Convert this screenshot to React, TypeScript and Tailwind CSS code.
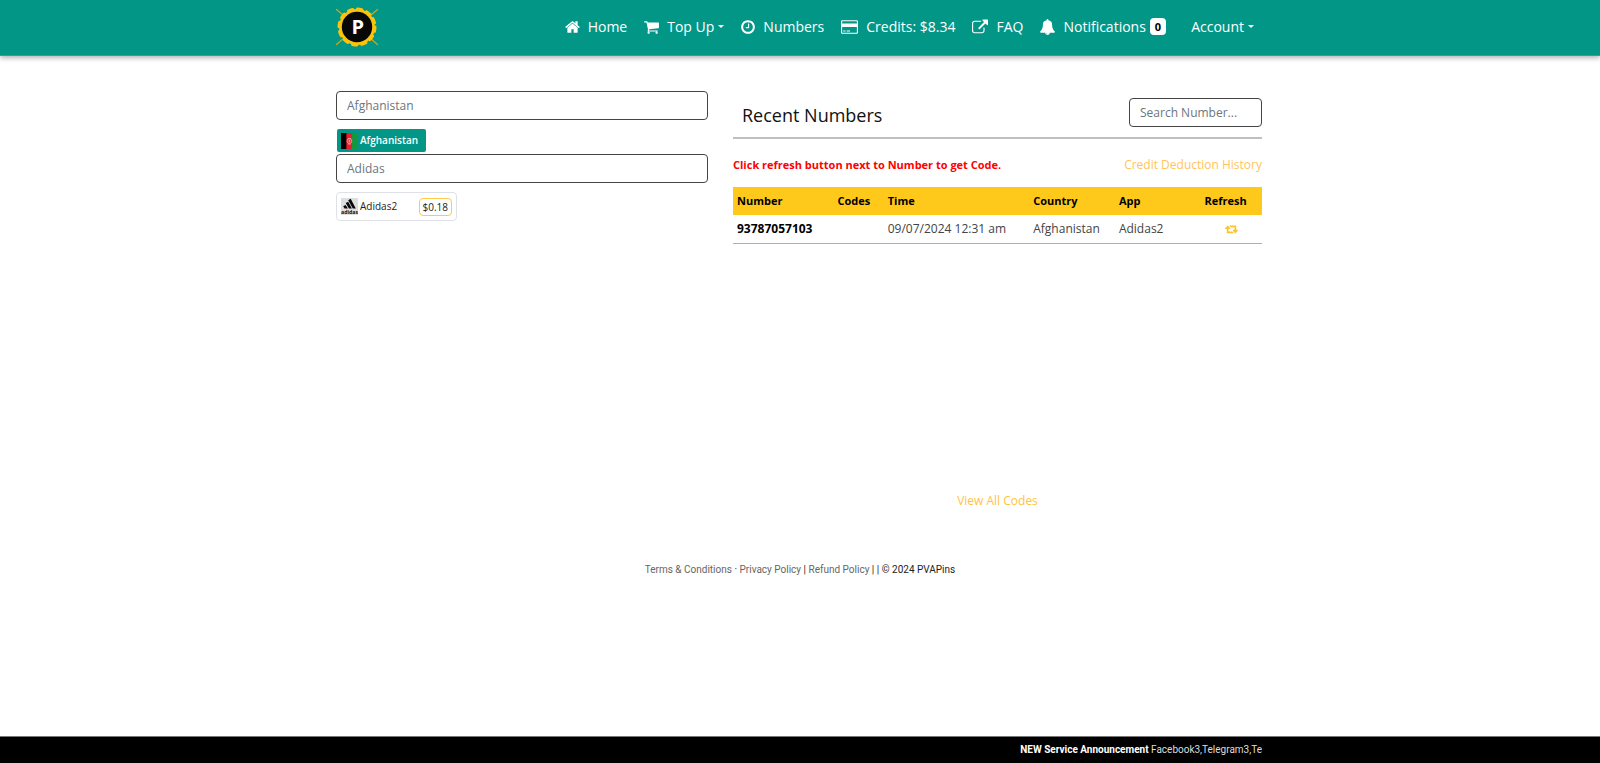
import React from "react";

type IconProps = { path: string; box: string; className: string };

const Icon = ({ path, box, className }: IconProps) => (
  <svg viewBox={box} className={className} fill="currentColor" aria-hidden="true">
    <path d={path} />
  </svg>
);

const HOME =
  "M1472 992v480q0 26-19 45t-45 19h-384v-384h-256v384h-384q-26 0-45-19t-19-45v-480q0-1 .5-3t.5-3l575-474 575 474q1 2 1 6zm223-69l-62 74q-8 9-21 11h-3q-13 0-21-7l-692-577-692 577q-12 8-24 7-13-2-21-11l-62-74q-8-10-7-23.5t11-21.5l719-599q32-26 76-26t76 26l244 204v-195q0-14 9-23t23-9h192q14 0 23 9t9 23v408l219 182q10 8 11 21.5t-7 23.5z";
const CART =
  "M704 1536q0 52-38 90t-90 38-90-38-38-90 38-90 90-38 90 38 38 90zm896 0q0 52-38 90t-90 38-90-38-38-90 38-90 90-38 90 38 38 90zm128-1088v512q0 24-16.5 42.5t-40.5 21.5l-1044 122q13 60 13 70 0 16-24 64h920q26 0 45 19t19 45-19 45-45 19h-1024q-26 0-45-19t-19-45q0-11 8-31.5t16-36 21.5-40 15.5-29.5l-177-823h-204q-26 0-45-19t-19-45 19-45 45-19h256q16 0 28.5 6.5t19.5 15.5 13 24.5 8 26 5.5 29.5 4.5 26h1201q26 0 45 19t19 45z";
const CLOCK =
  "M1024 544v448q0 14-9 23t-23 9h-320q-14 0-23-9t-9-23v-64q0-14 9-23t23-9h224v-352q0-14 9-23t23-9h64q14 0 23 9t9 23zm416 352q0-148-73-273t-198-198-273-73-273 73-198 198-73 273 73 273 198 198 273 73 273-73 198-198 73-273zm224 0q0 209-103 385.5t-279.5 279.5-385.5 103-385.5-103-279.5-279.5-103-385.5 103-385.5 279.5-279.5 385.5-103 385.5 103 279.5 279.5 103 385.5z";
const CARD =
  "M1760 128h-1600q-66 0-113 47t-47 113v1216q0 66 47 113t113 47h1600q66 0 113-47t47-113v-1216q0-66-47-113t-113-47zm-1600 128h1600q13 0 22.5 9.5t9.5 22.5v224h-1664v-224q0-13 9.5-22.5t22.5-9.5zm1600 1280h-1600q-13 0-22.5-9.5t-9.5-22.5v-608h1664v608q0 13-9.5 22.5t-22.5 9.5zm-1504-128v-128h256v128h-256zm384 0v-128h384v128h-384z";
const EXTERNAL =
  "M1472 992v320q0 119-84.5 203.5t-203.5 84.5h-832q-119 0-203.5-84.5t-84.5-203.5v-832q0-119 84.5-203.5t203.5-84.5h704q14 0 23 9t9 23v64q0 14-9 23t-23 9h-704q-66 0-113 47t-47 113v832q0 66 47 113t113 47h832q66 0 113-47t47-113v-320q0-14 9-23t23-9h64q14 0 23 9t9 23zm384-864v512q0 26-19 45t-45 19-45-19l-176-176-652 652q-10 10-23 10t-23-10l-114-114q-10-10-10-23t10-23l652-652-176-176q-19-19-19-45t19-45 45-19h512q26 0 45 19t19 45z";
const BELL =
  "M912 1696q0-16-16-16-59 0-101.5-42.5t-42.5-101.5q0-16-16-16t-16 16q0 73 51.5 124.5t124.5 51.5q16 0 16-16zm816-288q0 52-38 90t-90 38h-448q0 106-75 181t-181 75-181-75-75-181h-448q-52 0-90-38t-38-90q50-42 91-88t85-119.5 74.5-158.5 50-206 19.5-260q0-152 117-282.5t307-158.5q-8-19-8-39 0-40 28-68t68-28 68 28 28 68q0 20-8 39 190 28 307 158.5t117 282.5q0 139 19.5 260t50 206 74.5 158.5 85 119.5 91 88z";
const RETWEET =
  "M1280 1504q0 13-9.5 22.5t-22.5 9.5h-960q-8 0-13.5-2t-9-7-5.5-8-3-11.5-1-11.5v-600h-192q-26 0-45-19t-19-45q0-24 15-41l320-384q19-22 49-22t49 22l320 384q15 17 15 41 0 26-19 45t-45 19h-192v384h576q16 0 25 11l160 192q7 10 7 21zm640-416q0 24-15 41l-320 384q-20 23-49 23t-49-23l-320-384q-15-17-15-41 0-26 19-45t45-19h192v-384h-576q-16 0-25-12l-160-192q-7-9-7-20 0-13 9.5-22.5t22.5-9.5h960q8 0 13.5 2t9 7 5.5 8 3 11.5 1 11.5v600h192q26 0 45 19t19 45z";

const Caret = () => (
  <svg viewBox="0 0 6 3" className="ml-1 h-[3px] w-[6px]" fill="currentColor" aria-hidden="true">
    <path d="M0 0h6L3 3z" />
  </svg>
);

const Logo = () => (
  <svg viewBox="1 0 42 44" className="h-11 w-[42px]" role="img" aria-label="PVAPins">
    <g stroke="#c9a51c" strokeWidth="1.3" strokeLinecap="round">
      <path d="M1.5 4.5 42.5 39.5M42.5 4.5 1.5 39.5" />
    </g>
    <circle cx="22" cy="22" r="18" fill="#fdc30a" />
    <circle cx="22" cy="22" r="18" fill="none" stroke="#fdc30a" strokeWidth="3" strokeDasharray="4.4 5.025" strokeLinecap="round" />
    <circle cx="22" cy="22" r="15.2" fill="#080808" />
    <text x="22.8" y="29" textAnchor="middle" fontSize="20" fontWeight="700" fill="#fff" fontFamily="Open Sans, sans-serif">
      P
    </text>
  </svg>
);

const AfghanFlag = () => (
  <svg viewBox="0 0 16 16" className="size-4 shrink-0" aria-hidden="true">
    <rect width="6" height="16" fill="#000" />
    <rect x="5.4" width="6" height="16" fill="#ea1f2d" />
    <rect x="11" width="5" height="16" fill="#17953f" />
    <g fill="none" stroke="#f2a3a8" strokeWidth=".8">
      <circle cx="8.4" cy="8" r="2.4" />
      <path d="M7 5.5h3M7 11h3M8.4 6.5v3M7.3 8h2.2" />
    </g>
  </svg>
);

const AdidasMark = () => (
  <svg viewBox="0 0 17 17" className="size-[17px] shrink-0" aria-hidden="true">
    <rect width="17" height="17" fill="#dedede" />
    <path d="M7.2 2.2 9.7.8 14.8 10.6h-3zM4.7 5.1l2.5-1.4 3.7 6.9H7.9zM2.2 8.3l2.4-1.3 2.3 3.6H3.6z" fill="#080808" />
    <text x="8.5" y="16.1" textAnchor="middle" fontSize="5.2" fontWeight="700" fill="#111" fontFamily="Open Sans, sans-serif">
      adidas
    </text>
  </svg>
);

const container = "mx-auto w-full max-w-[928px] pr-[2px]";
const navLink = "flex items-center gap-2";
const fieldStyle =
  "block h-[29px] w-full rounded border border-[#444] bg-white px-[10px] text-xs text-[#212529] placeholder:text-[#6c757d]";

export default function App() {
  return (
    <div className="flex min-h-screen flex-col bg-white font-['Open_Sans','Noto_Sans',sans-serif] text-xs text-[#444]">
      <header className="border-b border-[#65888a] bg-[#029687] shadow-[0_2px_5px_rgba(0,0,0,0.3)]">
        <div className={`${container} flex h-[55px] items-center justify-between pb-[2px]`}>
          <a href="#" aria-label="PVAPins home">
            <Logo />
          </a>
          <nav className="flex items-center gap-[17px] pr-2 text-sm leading-6 text-white">
            <a href="#" className={navLink}>
              <Icon path={HOME} box="64 0 1664 1792" className="h-4 w-[15px]" />
              Home
            </a>
            <button type="button" className="flex items-center">
              <Icon path={CART} box="64 0 1664 1792" className="mr-2 h-4 w-[15px]" />
              Top Up
              <Caret />
            </button>
            <a href="#" className={navLink}>
              <Icon path={CLOCK} box="128 0 1536 1792" className="h-4 w-[14px]" />
              Numbers
            </a>
            <a href="#" className={navLink}>
              <Icon path={CARD} box="0 0 1920 1792" className="h-4 w-[17px]" />
              Credits: $8.34
            </a>
            <a href="#" className={navLink}>
              <Icon path={EXTERNAL} box="64 0 1792 1792" className="size-4" />
              FAQ
            </a>
            <a href="#" className="flex items-center">
              <Icon path={BELL} box="64 0 1664 1792" className="mr-2 h-4 w-[15px]" />
              Notifications
              <span className="ml-1 rounded bg-white px-[5px] text-[11px] leading-[17px] font-bold text-black">0</span>
            </a>
            <button type="button" className="ml-2 flex items-center">
              Account
              <Caret />
            </button>
          </nav>
        </div>
      </header>

      <main className={`${container} grid grid-cols-[372fr_529fr] gap-x-[25px] pt-[35px]`}>
        <section>
          <input aria-label="Country" placeholder="Afghanistan" className={fieldStyle} />
          <button
            type="button"
            className="mt-[9px] ml-px flex h-[23px] items-center gap-[3px] rounded-xs bg-[#029687] pr-2 pl-1 text-[10px] font-semibold text-white"
          >
            <AfghanFlag />
            Afghanistan
          </button>
          <input aria-label="App" placeholder="Adidas" className={`${fieldStyle} mt-[2px]`} />
          <button
            type="button"
            className="mt-[9px] flex h-[29px] w-[121px] items-center rounded-sm border border-[#dee2e6] px-1 text-[10px] text-[#222]"
          >
            <AdidasMark />
            <span className="ml-[2px]">Adidas2</span>
            <span className="ml-auto rounded border border-[#ffc94a] px-[3px] leading-4">$0.18</span>
          </button>
        </section>

        <section>
          <div className="flex items-center justify-between border-b-2 border-[#c0c0c0] pt-[7px] pb-[10px]">
            <h1 className="pt-[5px] pl-[9px] text-lg leading-6 text-[#111]">Recent Numbers</h1>
            <div className="w-[133px]">
              <input type="search" aria-label="Search number" placeholder="Search Number..." className={fieldStyle} />
            </div>
          </div>
          <div className="flex items-center justify-between pt-4 pb-3 leading-5">
            <p className="text-[11px] font-bold text-[#f00]">Click refresh button next to Number to get Code.</p>
            <a href="#" className="text-[#ffc55c]">
              Credit Deduction History
            </a>
          </div>
          <table className="w-full table-fixed text-left leading-5">
            <colgroup>
              <col className="w-[19%]" />
              <col className="w-[9.5%]" />
              <col className="w-[27.5%]" />
              <col className="w-[16.2%]" />
              <col className="w-[16.2%]" />
              <col className="w-[11.6%]" />
            </colgroup>
            <thead className="bg-[#ffc91c] text-[11px] text-black">
              <tr>
                <th className="p-1">Number</th>
                <th className="p-1">Codes</th>
                <th className="p-1">Time</th>
                <th className="p-1">Country</th>
                <th className="p-1">App</th>
                <th className="p-1">Refresh</th>
              </tr>
            </thead>
            <tbody>
              <tr className="border-b border-[#adafb5]">
                <td className="p-1 font-bold text-black">93787057103</td>
                <td className="p-1"></td>
                <td className="p-1">09/07/2024 12:31 am</td>
                <td className="p-1">Afghanistan</td>
                <td className="p-1">Adidas2</td>
                <td className="p-1">
                  <button type="button" aria-label="Refresh code" className="mx-auto block text-[#ffc22e]">
                    <Icon path={RETWEET} box="0 0 1920 1792" className="h-3 w-[13px]" />
                  </button>
                </td>
              </tr>
            </tbody>
          </table>
          <p className="mt-[247px] text-center leading-5">
            <a href="#" className="text-[#ffc340]">
              View All Codes
            </a>
          </p>
        </section>
      </main>

      <footer className="mt-[49px] mb-8 text-center font-['Roboto',sans-serif] text-[10px] leading-5 text-[#222]">
        <a href="#" className="text-[#666]">Terms &amp; Conditions</a> ·{" "}
        <a href="#" className="text-[#666]">Privacy Policy</a> |{" "}
        <a href="#" className="text-[#666]">Refund Policy</a> | | © 2024 PVAPins
      </footer>

      <div className="mt-auto border-t border-[#777] bg-black font-['Roboto',sans-serif] text-[10px] leading-[26px] text-[#ddd]">
        <p className={`${container} text-right whitespace-nowrap`}>
          <strong className="text-white">NEW Service Announcement</strong> Facebook3,Telegram3,Te
        </p>
      </div>
    </div>
  );
}
